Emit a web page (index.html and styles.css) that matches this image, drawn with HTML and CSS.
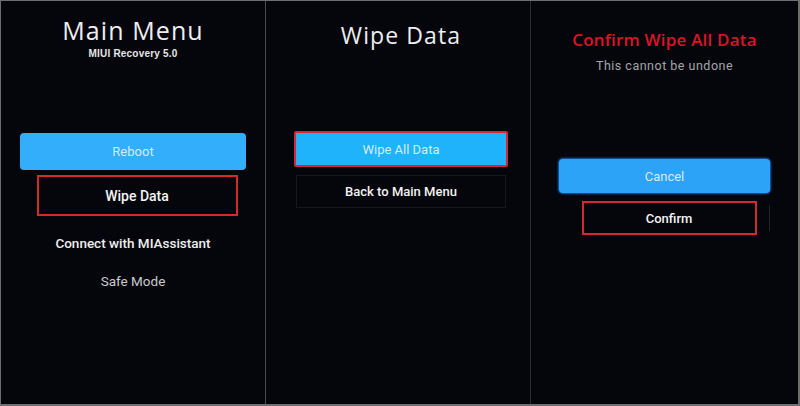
FILE: index.html
```html
<!DOCTYPE html>
<html>
<head>
<meta charset="utf-8">
<link rel="stylesheet" href="styles.css">
</head>
<body>
<div class="frame">
  <section class="panel p1">
    <h1 class="title t1">Main Menu</h1>
    <div class="sub">MIUI Recovery 5.0</div>
    <div class="btn blue b1">Reboot</div>
    <div class="item hl h1">Wipe Data</div>
    <div class="item strong connect">Connect with MIAssistant</div>
    <div class="item plain safe">Safe Mode</div>
  </section>
  <section class="panel p2">
    <h1 class="title t2">Wipe Data</h1>
    <div class="btn blue b2">Wipe All Data</div>
    <div class="item dim back">Back to Main Menu</div>
  </section>
  <section class="panel p3">
    <h1 class="title t3">Confirm Wipe All Data</h1>
    <div class="warn">This cannot be undone</div>
    <div class="btn blue b3">Cancel</div>
    <div class="row">
      <div class="item hl h3">Confirm</div>
      <span class="tick"></span>
    </div>
  </section>
</div>
</body>
</html>
```

FILE: styles.css
```css
* { box-sizing: border-box; margin: 0; padding: 0; }
html, body { width: 800px; height: 406px; background: #05060b; overflow: hidden; }
body { font-family: Roboto, "Liberation Sans", Arial, sans-serif; color: #f2f2f2; }

.frame {
  width: 800px;
  height: 406px;
  display: flex;
  border: 1px solid #6e6e70;
  border-bottom-width: 2px;
  border-right-width: 2px;
  background: #05060b;
}

.panel {
  display: flex;
  flex-direction: column;
  align-items: center;
  height: 100%;
}
.p1 { width: 265px; border-right: 1px solid #4a4a4e; }
.p2 { width: 265px; border-right: 1px solid #2c2c30; }
.p3 { flex: 1; }

.title {
  font-family: "Open Sans", sans-serif;
  font-weight: 500;
  color: #eceef2;
  white-space: nowrap;
}
.t1 { font-size: 25px; line-height: 30px; letter-spacing: 1.1px; margin-top: 14px; }
.t2 { font-size: 23px; line-height: 28px; letter-spacing: 1.1px; margin-top: 20px; margin-left: 6px; }
.t3 { font-size: 17px; line-height: 22px; font-weight: 600; color: #dc1428; letter-spacing: 0.2px; margin-top: 28px; }

.sub { font-family: "Liberation Sans", Arial, sans-serif; font-size: 10px; line-height: 12px; font-weight: 700; margin-top: 3px; color: #e6e6e6; letter-spacing: 0.2px; }
.warn { font-size: 12.5px; line-height: 16px; color: #a3a6ac; letter-spacing: 0.5px; margin-top: 7px; }

.btn {
  display: flex;
  align-items: center;
  justify-content: center;
  font-size: 13px;
  color: #d3eafa;
  border-radius: 4px;
}
.blue { background: #33aefb; }
.b1 { width: 226px; height: 37px; margin-top: 73px; }
.b2 { width: 214px; height: 36px; margin-top: 82px; margin-left: 6px; background: #1eb3fb; border: 2px solid #d4283a; border-radius: 2px; }
.b3 { width: 211px; height: 34px; margin-top: 85px; background: #2ca3f7; box-shadow: 0 0 2px 1px #1666c8; }

.item {
  display: flex;
  align-items: center;
  justify-content: center;
  font-size: 13.5px;
  white-space: nowrap;
}
.hl { border: 2px solid #d22a31; font-weight: 500; color: #f4f4f4; }
.h1 { width: 201px; height: 41px; margin-top: 5px; margin-left: 8px; font-size: 14px; }
.strong { font-weight: 500; color: #eeeeee; font-size: 13.5px; height: 20px; margin-top: 17px; }
.plain { color: #c9cacc; font-size: 13.5px; height: 20px; margin-top: 18px; }
.dim { width: 210px; height: 33px; margin-top: 8px; margin-left: 6px; border: 1px solid #17181d; font-weight: 500; font-size: 13px; }

.row { display: flex; align-items: center; margin-top: 8px; margin-left: 22px; gap: 12px; }
.h3 { width: 175px; height: 34px; font-size: 13px; }
.tick { width: 1px; height: 26px; background: #222328; }
```
